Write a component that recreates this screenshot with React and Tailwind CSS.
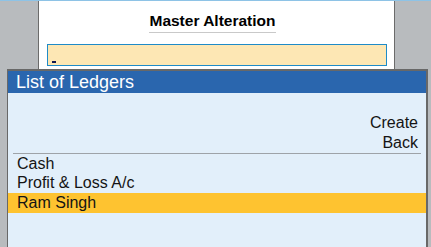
import React from 'react';

const ledgers = ['Cash', 'Profit & Loss A/c', 'Ram Singh'];
const selected = 'Ram Singh';

export default function App() {
  return (
    <div className="relative w-[431px] h-[247px] overflow-hidden bg-[#b8bbbe] border-t border-[#8ec3e6] font-['Liberation_Sans',Arial,sans-serif] text-[#141414]">
      {/* master alteration panel */}
      <div className="ml-[38px] w-[357px] h-full bg-white border-x border-[#6b6b6b]">
        <div className="pt-[11px] pr-[8px] flex justify-center">
          <div className="font-bold text-[15.5px] leading-[18px] pb-[2px] border-b border-[#c9c9c9] text-black">
            Master Alteration
          </div>
        </div>
        <div className="mt-[11px] ml-[8px] w-[340px] h-[22px] bg-[#fde7b4] border border-[#1f8bc8] flex items-end pl-[4px] pb-[2px]">
          <span className="block w-[4px] h-[2px] bg-[#101850]" />
        </div>
      </div>

      {/* list popup */}
      <div className="absolute left-[7px] top-[68px] w-[421px] bottom-0 border-t-2 border-l border-r-2 border-[#686868] bg-[#e2effa]">
        <div className="h-[22px] bg-[#2a66ae] text-white text-[18px] leading-[22px] pl-[8px]">
          List of Ledgers
        </div>
        <div className="pt-[20px] text-[16px]">
          <div className="text-right pr-[8px] leading-[20px]">Create</div>
          <div className="text-right pr-[8px] leading-[20px]">Back</div>
          <div className="mx-[5px] h-px bg-[#9ea3a8]" />
          {ledgers.map((name, i) => (
            <div
              key={name}
              className={`pl-[9px] ${i === 0 ? 'leading-[19px]' : 'leading-[20px]'} ${
                name === selected ? 'bg-[#fec330]' : ''
              }`}
            >
              {name}
            </div>
          ))}
        </div>
      </div>
    </div>
  );
}
